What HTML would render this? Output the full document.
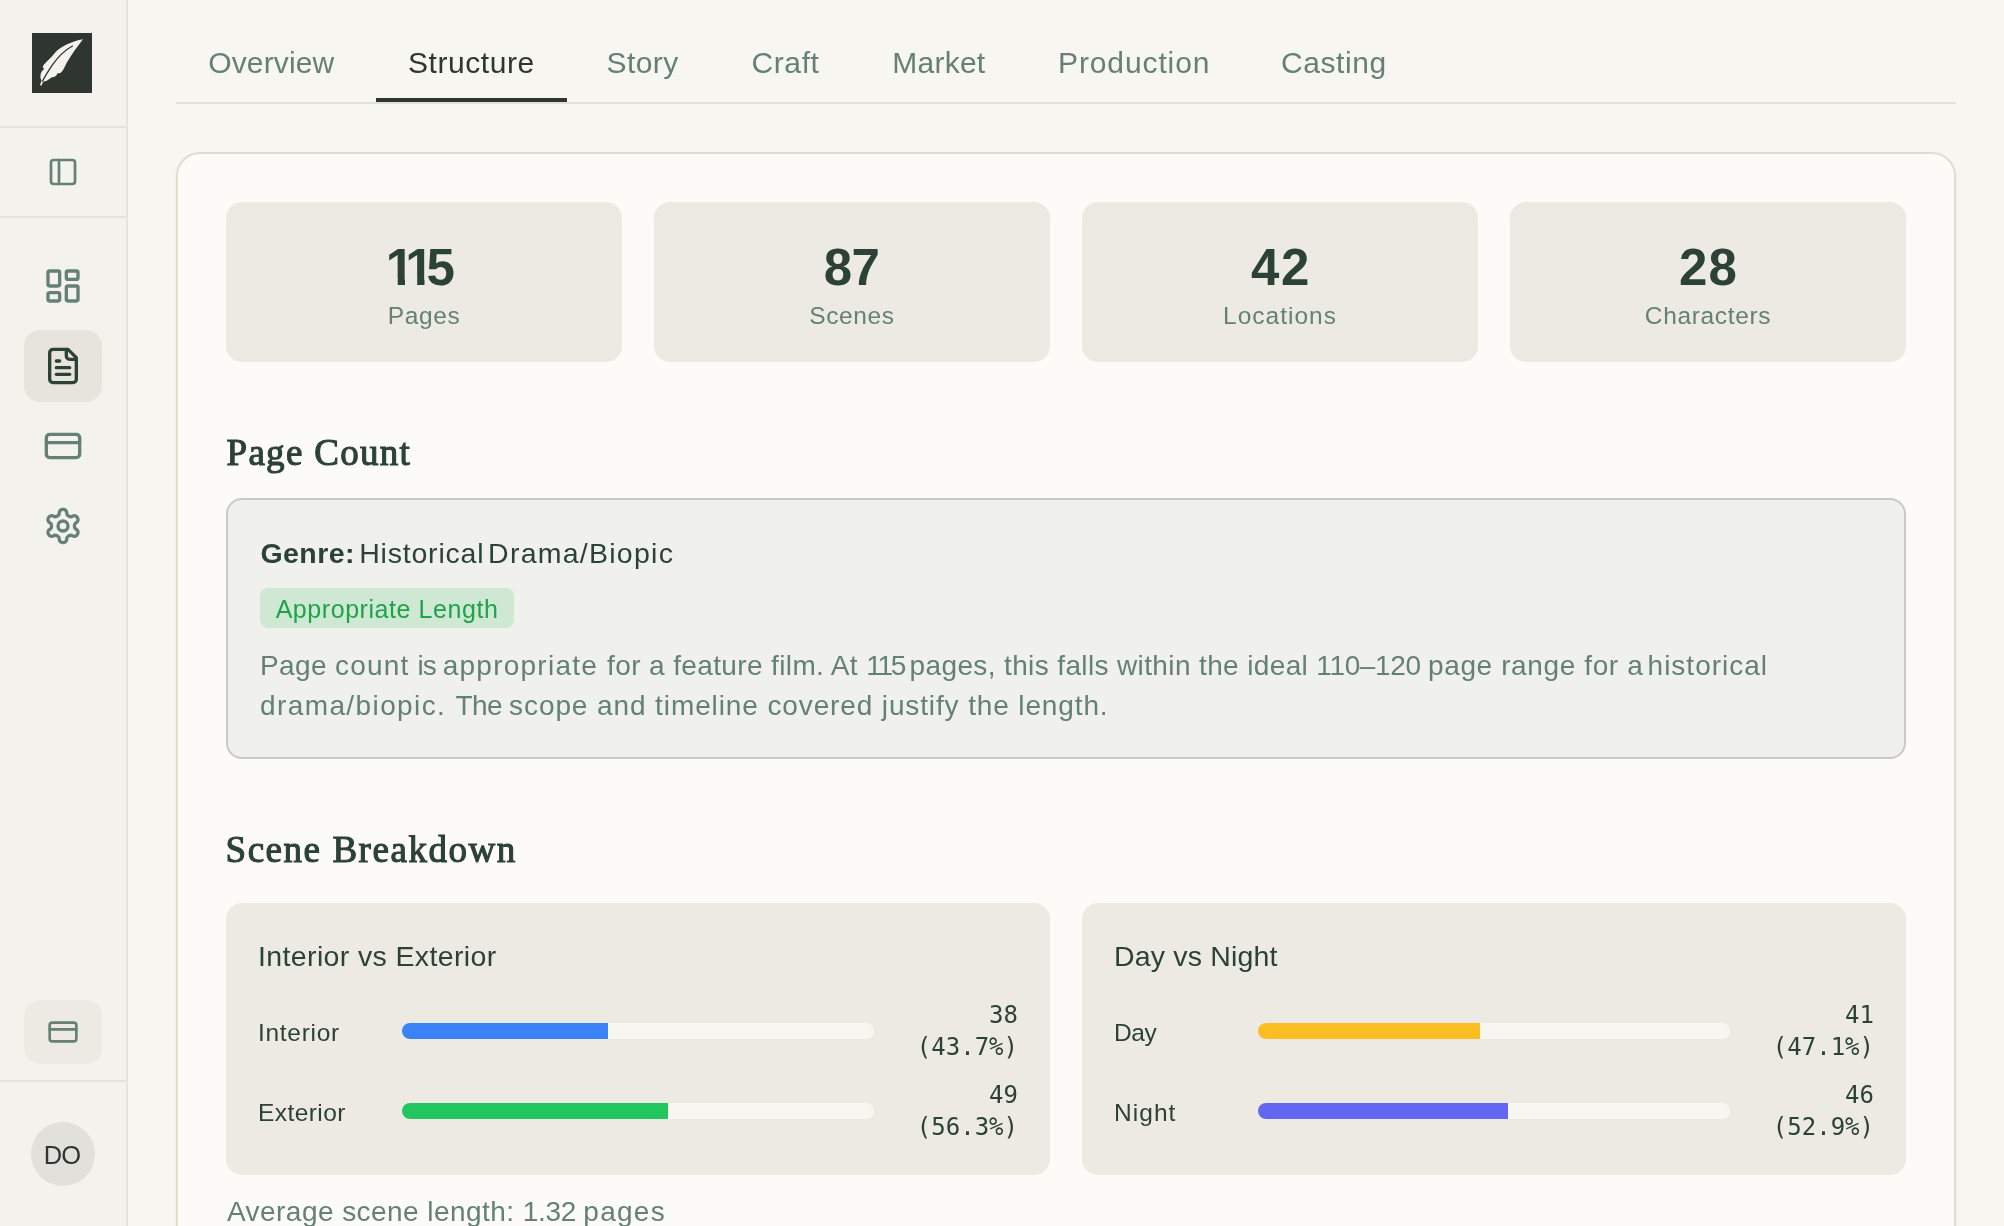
<!DOCTYPE html>
<html lang="en">
<head>
<meta charset="utf-8">
<title>Structure</title>
<style>
*{box-sizing:border-box;margin:0;padding:0}
html,body{width:2004px;height:1226px;overflow:hidden}
body{background:#f8f6f1;font-family:"Liberation Sans",sans-serif;color:#2d3a33;position:relative}
#root{position:absolute;left:0;top:0;width:2004px;height:1226px;will-change:transform}
/* sidebar */
#side{position:absolute;left:0;top:0;width:128px;height:1226px;background:#f4f2ed;border-right:2px solid #e6e3da}
.hr{position:absolute;left:0;width:126px;height:2px;background:#e6e3da}
#logo{position:absolute;left:32px;top:33px;width:60px;height:60px;background:#2f3630}
.ico{position:absolute;fill:none;stroke:#648174;stroke-width:2;stroke-linecap:round;stroke-linejoin:round}
.active{position:absolute;left:24px;top:330px;width:78px;height:72px;border-radius:16px;background:#e7e4dc}
.btn2{position:absolute;left:24px;top:1000px;width:78px;height:64px;border-radius:16px;background:#edeae3}
#avatar{position:absolute;left:31px;top:1122px;width:64px;height:64px;border-radius:50%;background:#e2e0da;color:#2f3630;font-size:25.5px;line-height:66px;text-align:center;letter-spacing:-0.8px;text-indent:-2px}
/* tabs */
.tab{position:absolute;top:45px;font-size:30px;line-height:36px;color:#648174;white-space:nowrap}
.tab.on{color:#2f3630}
#tabline{position:absolute;left:176px;top:102px;width:1780px;height:2px;background:#e3e0d6}
#tabon{position:absolute;left:376px;top:98px;width:191px;height:4px;background:#2f3630}
/* card */
#card{position:absolute;left:176px;top:152px;width:1780px;height:1200px;border:2px solid #dfdcd1;border-radius:24px;background:#fcfbf8;box-shadow:0 2px 4px rgba(0,0,0,0.04)}
.stat{position:absolute;top:202px;width:396px;height:160px;border-radius:16px;background:#edeae3;text-align:center}
.stat b{display:block;position:relative;margin-top:36px;font-size:51px;line-height:60px;font-weight:700;color:#2c4237}
.stat b i{font-style:normal;display:inline-block;margin-right:-8.9px;clip-path:polygon(0 0,100% 0,100% 41px,19.2px 41px,19.2px 100%,11.9px 100%,11.9px 41px,0 41px)}
.stat span{display:block;margin-top:2px;font-size:24.5px;line-height:32px;color:#648174;letter-spacing:0.6px}
h2{position:absolute;left:226px;font-family:"Liberation Serif",serif;font-weight:400;-webkit-text-stroke:1.1px #2c4237;font-size:37px;line-height:48px;color:#2c4237;white-space:nowrap}
#pc{position:absolute;left:226px;top:498px;width:1680px;height:261px;border:2px solid #c9cac5;border-radius:16px;background:#f0f1ec}
#genre{position:absolute;left:260.4px;top:535px;font-size:28.5px;line-height:36px;color:#2c4237;white-space:nowrap}
#genre b{color:#2c4237;letter-spacing:0.45px}#genre span{letter-spacing:0.8px;margin-left:-4.5px}
#badge{position:absolute;left:260px;top:588px;width:254px;height:40px;border-radius:8px;background:#cfe8d3;color:#1fa34a;font-size:25px;letter-spacing:0.56px;line-height:42px;text-align:center;white-space:nowrap}
.para{position:absolute;left:260px;font-size:28px;line-height:40px;color:#648174;white-space:nowrap}
.bd{position:absolute;top:903px;width:824px;height:272px;border-radius:16px;background:#edeae3}
.bd h3{position:absolute;left:32px;top:35px;font-size:28.5px;line-height:36px;font-weight:400;color:#2c4237;white-space:nowrap}
.lbl{position:absolute;left:32px;font-size:24.5px;line-height:32px;color:#2c4237;white-space:nowrap}
.track{position:absolute;left:176px;width:472px;height:16px;border-radius:8px;background:#f8f6f1;overflow:hidden}
.track i{display:block;height:16px}
.val{position:absolute;right:32px;font-family:"DejaVu Sans Mono","Liberation Mono",monospace;font-size:24px;line-height:32px;color:#2c4237;text-align:right;white-space:nowrap}
</style>
</head>
<body>
<div id="root">
<div id="side">
  <div id="logo">
    <svg width="60" height="60" viewBox="0 0 60 60"><path d="M51 6.2L46.8 7.1L42.2 8.6L35.7 10.9Q32 12.6 29.2 14.5Q26 16.6 23.9 18.7L19.4 23.9L14.8 28.5L11.2 32.4L10.8 34.4L12.2 35.8L9.9 38.3Q8.9 39.8 8.6 41.5Q8.3 43.5 8.6 45.5L9.5 47.6L8 52.2L9.3 52.8L11.4 48.6L14.1 48.1Q16 47.3 17.4 46.1L19.4 44.5L22.6 43.8L24.6 42.2L25.2 40.6L28.5 39.9Q30 38.6 31.1 37L32.4 34.4L35 29.2L38.3 23.9L42.2 18.1L46.1 12.8Z" fill="#f4f2ed"/><path d="M40.4 13Q34.2 16.4 29.2 21.4Q24.4 26.4 20.8 31.4Q17.4 36.4 14.9 40.4Q12.2 45 10.4 48.2" stroke="#2f3630" stroke-width="1.3" fill="none" stroke-linecap="round"/></svg>
  </div>
  <div class="hr" style="top:126px"></div>
  <svg class="ico" style="left:47px;top:156px" width="32" height="32" viewBox="0 0 24 24"><rect width="18" height="18" x="3" y="3" rx="2"/><path d="M9 3v18"/></svg>
  <div class="hr" style="top:216px"></div>
  <svg class="ico" style="left:43px;top:266px" width="40" height="40" viewBox="0 0 24 24"><rect width="7" height="9" x="3" y="3" rx="1"/><rect width="7" height="5" x="14" y="3" rx="1"/><rect width="7" height="9" x="14" y="12" rx="1"/><rect width="7" height="5" x="3" y="16" rx="1"/></svg>
  <div class="active"></div>
  <svg class="ico" style="left:43px;top:346px;stroke:#2c4237" width="40" height="40" viewBox="0 0 24 24"><path d="M15 2H6a2 2 0 0 0-2 2v16a2 2 0 0 0 2 2h12a2 2 0 0 0 2-2V7Z"/><path d="M14 2v4a2 2 0 0 0 2 2h4"/><path d="M10 9H8"/><path d="M16 13H8"/><path d="M16 17H8"/></svg>
  <svg class="ico" style="left:43px;top:426px" width="40" height="40" viewBox="0 0 24 24"><rect width="20" height="14" x="2" y="5" rx="2"/><line x1="2" x2="22" y1="10" y2="10"/></svg>
  <svg class="ico" style="left:43px;top:506px" width="40" height="40" viewBox="0 0 24 24"><path d="M12.22 2h-.44a2 2 0 0 0-2 2v.18a2 2 0 0 1-1 1.730l-.43.25a2 2 0 0 1-2 0l-.15-.08a2 2 0 0 0-2.730.73l-.22.38a2 2 0 0 0 .73 2.730l.15.1a2 2 0 0 1 1 1.720v.51a2 2 0 0 1-1 1.740l-.15.09a2 2 0 0 0-.73 2.730l.22.38a2 2 0 0 0 2.730.73l.15-.08a2 2 0 0 1 2 0l.43.25a2 2 0 0 1 1 1.730V20a2 2 0 0 0 2 2h.44a2 2 0 0 0 2-2v-.18a2 2 0 0 1 1-1.730l.43-.25a2 2 0 0 1 2 0l.15.080a2 2 0 0 0 2.730-.73l.22-.39a2 2 0 0 0-.73-2.730l-.15-.08a2 2 0 0 1-1-1.740v-.5a2 2 0 0 1 1-1.740l.15-.09a2 2 0 0 0 .73-2.730l-.22-.38a2 2 0 0 0-2.730-.73l-.15.080a2 2 0 0 1-2 0l-.43-.25a2 2 0 0 1-1-1.730V4a2 2 0 0 0-2-2z"/><circle cx="12" cy="12" r="3"/></svg>
  <div class="btn2"></div>
  <svg class="ico" style="left:47px;top:1016px" width="32" height="32" viewBox="0 0 24 24"><rect width="20" height="14" x="2" y="5" rx="2"/><line x1="2" x2="22" y1="10" y2="10"/></svg>
  <div class="hr" style="top:1080px"></div>
  <div id="avatar">DO</div>
</div>

<div class="tab" style="left:208.25px;letter-spacing:0.14px">Overview</div>
<div class="tab on" style="left:408px;letter-spacing:0.56px">Structure</div>
<div class="tab" style="left:606.5px;letter-spacing:0.44px">Story</div>
<div class="tab" style="left:751.5px;letter-spacing:0.6px">Craft</div>
<div class="tab" style="left:892.25px;letter-spacing:0.25px">Market</div>
<div class="tab" style="left:1058px;letter-spacing:0.89px">Production</div>
<div class="tab" style="left:1281px;letter-spacing:0.58px">Casting</div>
<div id="tabline"></div>
<div id="tabon"></div>

<div id="card"></div>
<div class="stat" style="left:226px"><b style="left:-3.6px"><i>1</i><i style="margin-right:-7.1px">1</i>5</b><span>Pages</span></div>
<div class="stat" style="left:654px"><b style="letter-spacing:-0.6px;left:-0.5px">87</b><span>Scenes</span></div>
<div class="stat" style="left:1082px"><b style="letter-spacing:1.6px;left:1px">42</b><span style="letter-spacing:1px">Locations</span></div>
<div class="stat" style="left:1510px"><b style="letter-spacing:1.1px;left:0.5px">28</b><span style="letter-spacing:0.65px">Characters</span></div>

<h2 style="top:429px;left:226.5px;letter-spacing:1.3px">Page Count</h2>
<div id="pc"></div>
<div id="genre"><b>Genre:</b><span> Historical </span><span style="margin-left:-5px;letter-spacing:1.25px">Drama/Biopic</span></div>
<div id="badge">Appropriate Length</div>
<div class="para" style="top:646px;letter-spacing:0.37px">Page <span style="letter-spacing:1.17px">count</span> <span style="letter-spacing:-0.96px">is </span><span style="letter-spacing:1.25px">appropriate </span>for a feature film. At <span style="letter-spacing:-2.25px">115 </span>pages, this falls within the ideal <span style="letter-spacing:-0.38px">110–120 </span><span style="letter-spacing:0.62px">page range for </span><span style="letter-spacing:-1.5px">a </span><span style="letter-spacing:1px">historical</span></div>
<div class="para" style="top:686px;letter-spacing:0.9px"><span style="letter-spacing:1.4px">drama/biopic. </span><span style="letter-spacing:-0.6px">The </span>scope and timeline <span style="letter-spacing:0.87px">covered justify the length.</span></div>

<h2 style="top:826px;left:225.5px;letter-spacing:1.55px">Scene Breakdown</h2>
<div class="bd" style="left:226px">
  <h3 style="letter-spacing:0.37px">Interior vs Exterior</h3>
  <div class="lbl" style="top:114px;letter-spacing:0.71px">Interior</div>
  <div class="track" style="top:120px"><i style="width:206px;background:#3b82f6"></i></div>
  <div class="val" style="top:96px">38<br>(43.7%)</div>
  <div class="lbl" style="top:194px;letter-spacing:0.43px">Exterior</div>
  <div class="track" style="top:200px"><i style="width:266px;background:#22c55e"></i></div>
  <div class="val" style="top:176px">49<br>(56.3%)</div>
</div>
<div class="bd" style="left:1082px">
  <h3 style="letter-spacing:0.18px">Day vs Night</h3>
  <div class="lbl" style="top:114px;letter-spacing:-0.4px">Day</div>
  <div class="track" style="top:120px"><i style="width:222px;background:#fbbf24"></i></div>
  <div class="val" style="top:96px">41<br>(47.1%)</div>
  <div class="lbl" style="top:194px;letter-spacing:1.04px">Night</div>
  <div class="track" style="top:200px"><i style="width:250px;background:#6366f1"></i></div>
  <div class="val" style="top:176px">46<br>(52.9%)</div>
</div>
<div class="para" style="left:227px;top:1192px;letter-spacing:0.45px">Average scene length: <span style="letter-spacing:-0.35px">1.32 </span><span style="letter-spacing:1.25px">pages</span></div>
</div>
</body>
</html>
